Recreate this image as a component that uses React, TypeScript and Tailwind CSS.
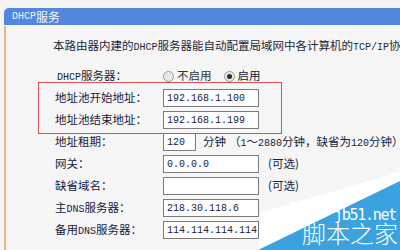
function L({ children }: { children: React.ReactNode }) {
    return <span className="font-['Liberation_Mono'] text-[10px]">{children}</span>;
}

function Radio({ checked }: { checked?: boolean }) {
    return (
        <span className="inline-flex w-[11px] h-[11px] rounded-full border border-[#9a9a9a] bg-[#e9e9e9] items-center justify-center mr-[3px]">
            {checked && <span className="w-[5px] h-[5px] rounded-full bg-[#2a2a2a]"></span>}
        </span>
    );
}

function Field({ value, w = "w-[96px]" }: { value?: string; w?: string }) {
    return (
        <div className={`${w} h-[18px] border border-[#7b7b7b] bg-white px-[3px] flex items-center text-[#1b2238]`}>
            <L>{value}</L>
        </div>
    );
}

function Row({ label, children }: { label: React.ReactNode; children: React.ReactNode }) {
    return (
        <div className="flex items-center h-[22px]">
            <div className="w-[108px] shrink-0 whitespace-nowrap">{label}</div>
            {children}
        </div>
    );
}

export default function App() {
    return (
        <div className="relative w-[400px] h-[250px] overflow-hidden bg-[#f4f4f4] pt-[8px] pl-[4px] font-['Noto_Sans_CJK_SC',sans-serif] text-[11.5px] text-[#15223f]">
            <div className="w-[420px] rounded-tl-[5px] overflow-hidden">
                {/* header */}
                <div className="h-[18px] bg-[#5187dd] text-[#f2f5ff] pl-[8px] flex items-center border-b border-white text-[12px]">
                    <L>DHCP</L>服务
                </div>

                {/* body */}
                <div className="border-l-2 border-[#e4b48c] bg-[#f6f6f6] pl-[49px] pt-[11px] h-[240px]">
                    <div className="h-[16px] leading-[16px] -ml-[2px] whitespace-nowrap text-[#1e2638]">
                        本路由器内建的<L>DHCP</L>服务器能自动配置局域网中各计算机的<L>TCP/IP</L>协议
                    </div>
                    <div className="mt-[12px]">
                        <Row label={<span className="ml-[2px]"><L>DHCP</L>服务器：</span>}>
                            <div className="flex items-center">
                                <Radio />
                                <span className="text-[#333]">不启用</span>
                                <span className="w-[12px]"></span>
                                <Radio checked />
                                <span>启用</span>
                            </div>
                        </Row>
                        <Row label="地址池开始地址：">
                            <Field value="192.168.1.100" />
                        </Row>
                        <Row label="地址池结束地址：">
                            <Field value="192.168.1.199" />
                        </Row>
                        <Row label="地址租期：">
                            <Field value="120" w="w-[33px]" />
                            <span className="ml-[7px] whitespace-nowrap">分钟</span>
                            <span className="ml-[3px] whitespace-nowrap">（<L>1</L>～<L>2880</L>分钟，缺省为<L>120</L>分钟）</span>
                        </Row>
                        <Row label="网关：">
                            <Field value="0.0.0.0" />
                            <span className="ml-[9px]">(可选)</span>
                        </Row>
                        <Row label="缺省域名：">
                            <Field value="" />
                            <span className="ml-[9px]">(可选)</span>
                        </Row>
                        <Row label={<span>主<L>DNS</L>服务器：</span>}>
                            <Field value="218.30.118.6" />
                        </Row>
                        <Row label={<span>备用<L>DNS</L>服务器：</span>}>
                            <Field value="114.114.114.114" />
                        </Row>
                    </div>
                </div>
            </div>

            {/* red highlight box */}
            <div className="absolute left-[38px] top-[82px] w-[244px] h-[52px] border-[1.5px] border-[#d9504e]"></div>

            {/* watermark corner */}
            <div className="absolute right-0 bottom-0 w-[160px] h-[80px]">
                <svg width="160" height="80" viewBox="0 0 160 80" className="block">
                    <polygon points="22,42 160,2 160,11 18,80" fill="#ffffff" />
                    <polygon points="18,80 160,11 160,80" fill="#3aa3df" />
                </svg>
                <div className="absolute left-[94px] top-[37px] text-[15px] leading-[16px] text-white font-['DejaVu_Sans_Mono'] tracking-[-1.3px]">
                    jb51.net
                </div>
                <div className="absolute left-[62px] top-[49px] text-[24px] leading-[28px] font-light text-white">
                    脚本之家
                </div>
            </div>
        </div>
    );
}
